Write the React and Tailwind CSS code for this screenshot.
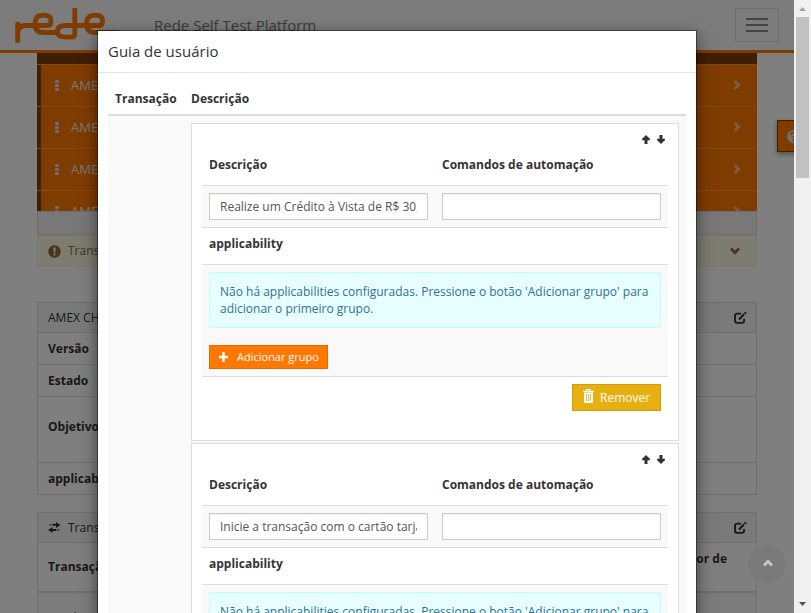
const Arrow = ({ down }) => (
  <svg className={down ? "rotate-180" : ""} width="8" height="9" viewBox="0 0 8 9" fill="#333">
    <path d="M4 0 8 4V5.200H5.500V9H2.500V5.200H0V4z" />
  </svg>
);

const Chevron = ({ className }) => (
  <svg className={className} width="8" height="10" viewBox="0 0 8 10" fill="none" stroke="currentColor" strokeWidth="2.9">
    <path d="M1.500 1 5.700 5 1.500 9" />
  </svg>
);

const Edit = () => (
  <svg width="13" height="12" viewBox="0 0 13 12" fill="none" stroke="#333">
    <path d="M7 1.6H3.2Q1 1.6 1 3.6V8.8Q1 10.9 3.2 10.9H8Q10.1 10.9 10.1 8.8V7" strokeWidth="1.9" />
    <path d="M5 7.4 10 2.3" strokeWidth="2.2" />
    <path d="M10.6 1.7 12 .4" strokeWidth="2.2" />
  </svg>
);

const Logo = () => (
  <svg width="106" height="38" viewBox="14 6 106 38" fill="none" stroke="#ff7800" strokeWidth="4.8" strokeLinejoin="round">
    <path d="M17.700 42.700V22M17.700 33Q18 26 25 25.500H48Q51 25.500 51 20.500Q51 15.200 43 15.200Q35 15.200 35 24Q35 32.500 43 32.500H58" />
    <path d="M74.800 8V34Q74.800 37.200 71 37.200H66Q57.500 37.200 57.500 31.500Q57.500 25.500 66 25.500H99Q102.600 25.500 102.600 20.500Q102.600 15.200 95 15.200Q86.500 15.200 86.500 24Q86.500 32.500 95 32.500H119" />
  </svg>
);

const MenuRow = () => (
  <div className="flex h-[42px] shrink-0 items-center border-t border-[#ff9333] bg-[#ff7800]">
    <div className="h-full w-1 bg-[#803c00]" />
    <div className="ml-[14px] flex flex-col gap-px">
      <i className="h-[3px] w-[4px] rounded-[1px] bg-[#ddd]" />
      <i className="h-[3px] w-[4px] rounded-[1px] bg-[#ddd]" />
      <i className="h-[3px] w-[4px] rounded-[1px] bg-[#ddd]" />
    </div>
    <span className="ml-[12px] flex-1 text-[13px] text-[#eee]">AMEX</span>
    <Chevron className="mr-4 mb-px text-[#ffb980]" />
  </div>
);

const Row = ({ h, children }) => (
  <div className={`flex items-center border-b border-[#ddd] pl-[10px] font-bold ${h}`}>{children}</div>
);

const Input = ({ value }) => (
  <div className="h-[27px] w-[219px] border border-[#ccc] bg-white px-[10px] shadow-[inset_0_1px_1px_rgba(0,0,0,0.075)]">
    <div className="h-[25px] overflow-hidden leading-[25px] whitespace-nowrap text-[#555]">{value}</div>
  </div>
);

const Step = ({ text }) => (
  <div className="h-[318px] w-[488px] shrink-0 border border-[#ddd] bg-white px-[10px] text-[#333]">
    <div className="flex h-[30px] items-center justify-end gap-[7px] pr-[3px]">
      <Arrow />
      <Arrow down />
    </div>
    <div className="flex h-[31px] items-start pl-[7px] leading-[21px] font-bold">
      <span className="w-[233px]">Descrição</span>
      <span>Comandos de automação</span>
    </div>
    <div className="flex h-[42px] gap-[14px] border-t border-[#ddd] bg-[#f9f9f9] pt-[7px] pl-[7px]">
      <Input value={text} />
      <Input />
    </div>
    <div className="h-[37px] border-t border-[#ddd] pl-[7px] leading-[32px] font-bold">applicability</div>
    <div className="h-[113px] border-y border-[#ddd] bg-[#f9f9f9] px-[7px] pt-[7px]">
      <div className="h-[56px] border border-[#bffff8] bg-[#e8ffff] px-[10px] pt-[10px] leading-[17px] text-[#31708f]">
        Não há applicabilities configuradas. Pressione o botão 'Adicionar grupo' para adicionar o primeiro grupo.
      </div>
      <div className="mt-[17px] flex h-[24px] w-[119px] items-center border border-[#e66c00] bg-[#ff7800] pl-[9px] text-[11px] text-white">
        <svg width="9" height="10" viewBox="0 0 9 10" fill="white"><path d="M3.300 0h2.400v3.800H9v2.400H5.700V10H3.300V6.200H0V3.800h3.300z" /></svg>
        <span className="ml-[9px]">Adicionar grupo</span>
      </div>
    </div>
    <div className="mt-[7px] mr-[7px] ml-auto flex h-[27px] w-[89px] items-center border border-[#cf9d0d] bg-[#e7b010] pl-[10px] text-white">
      <svg className="mb-[3px]" width="11" height="14" viewBox="0 0 11 14" fill="white">
        <path fillRule="evenodd" d="M3 0h5v1.800h3V3H0V1.800h3zM4 1v.8h3V1zM1 3.500h9V14H1zM3 5v7h.8V5zM5.100 5v7h.8V5zM7.200 5v7H8V5z" />
      </svg>
      <span className="ml-[6px]">Remover</span>
    </div>
  </div>
);

export default function App() {
  return (
    <div className="relative flex h-[613px] w-[811px] overflow-hidden bg-white font-['Open_Sans','Noto_Sans',sans-serif] text-[12px] text-[#333]">
      <div className="relative h-full w-[794px] overflow-hidden">
        <header className="flex h-[53px] border-b-[3px] border-[#ff7800] bg-[#f8f8f8] pl-[14px]">
          <div className="pt-[6px]"><Logo /></div>
          <div className="ml-[34px] flex-1 pt-[14px] text-[15px] leading-[22px] text-[#777]">Rede Self Test Platform</div>
          <div className="mt-[8px] mr-[15px] flex h-[34px] w-[44px] flex-col items-center justify-center gap-[4px] border border-[#ddd]">
            <i className="h-[2px] w-[22px] bg-[#888]" />
            <i className="h-[2px] w-[22px] bg-[#888]" />
            <i className="h-[2px] w-[22px] bg-[#888]" />
          </div>
        </header>
        <main className="ml-[37px] w-[720px]">
          <div className="flex h-[158px] flex-col overflow-hidden bg-[#803c00] pt-[11px]">
            <MenuRow /><MenuRow /><MenuRow /><MenuRow />
          </div>
          <div className="h-[24px] border border-[#ddd] bg-[#f0f0f0]" />
          <div className="flex h-[32px] items-center border border-[#faebcc] bg-[#fcf8e3] pl-[10px] text-[#8a6d3b]">
            <svg width="13" height="13" viewBox="0 0 13 13"><circle cx="6.500" cy="6.500" r="6.200" fill="#8a6d3b" /><path d="M5.300 2.500h2.400L7.300 7.500H5.700zM5.500 8.500h2v2h-2z" fill="#fcf8e3" /></svg>
            <span className="ml-[7px] flex-1">Transações</span>
            <Chevron className="mr-[17px] rotate-90 text-[#8a6d3b]" />
          </div>
          <section className="mt-[35px] border border-b-0 border-[#ddd]">
            <div className="flex h-[30px] items-center border-b border-[#ddd] bg-[#f5f5f5] pr-[9px] pl-[10px]"><span className="flex-1">AMEX CHIP</span><Edit /></div>
            <Row h="h-[32px]">Versão</Row>
            <Row h="h-[32px]">Estado</Row>
            <Row h="h-[66px] pb-[5px]">Objetivo</Row>
            <Row h="h-[32px]">applicability</Row>
          </section>
          <section className="mt-[17px] border border-[#ddd]">
            <div className="flex h-[30px] items-center border-b border-[#ddd] bg-[#f5f5f5] pr-[9px] pl-[10px]">
              <svg width="13" height="11" viewBox="0 0 13 11" fill="#333"><path d="M12.500 3 8 0v1.700H4.500v2H8V6zM0 8l4.500 3V9H8V7H4.500V5zM1 2.400h3v.8H1zM8.500 7.600h3v.8h-3z" /></svg>
              <span className="ml-[7px] flex-1">Transações</span><Edit />
            </div>
            <div className="flex h-[50px] border-b-2 border-[#ddd] pr-[29px] pl-[10px] font-bold">
              <span className="flex-1 leading-[48px]">Transação</span><span className="pt-[7px] leading-[17px]">Valor de</span>
            </div>
            <div className="h-[60px] bg-[#f9f9f9] pt-[16px] pl-[10px] leading-[17px]">Venda</div>
          </section>
        </main>
        <div className="absolute top-[120px] left-[777px] flex h-[32px] w-[40px] items-center border border-[#803c00] bg-[#ff7800] pl-[9px] shadow-[0_2px_5px_rgba(0,0,0,0.4)]">
          <svg width="13" height="13" viewBox="0 0 13 13"><circle cx="6.500" cy="6.500" r="6.500" fill="#ddd" /><path d="M4 5q0-2.500 2.500-2.500T9 4.800Q9 6 6.500 7v1M6.500 9v2" stroke="#ff7800" strokeWidth="1.700" fill="none" /></svg>
        </div>
        <div className="absolute inset-0 bg-black/50" />
        <div className="absolute top-[545px] left-[748px] flex h-[38px] w-[38px] items-center justify-center rounded-full bg-[#7a7a7a]">
          <Chevron className="mb-[2px] ml-px -rotate-90 text-[#c8c8c8]" />
        </div>
        <div className="absolute top-[30px] left-[97px] h-[640px] w-[600px] border border-black/40 bg-white bg-clip-padding shadow-[0_5px_15px_rgba(0,0,0,0.5)]">
          <div className="h-[42px] border-b border-[#e5e5e5] pl-[10px] text-[15px] leading-[41px]">Guia de usuário</div>
          <div className="mx-[10px] mt-[10px]">
            <div className="flex h-[33px] border-b-2 border-[#ddd] pl-[7px] leading-[32px] font-bold">
              <span className="w-[76px]">Transação</span><span>Descrição</span>
            </div>
            <div className="flex h-[560px] flex-col gap-[2px] bg-[#f9f9f9] pt-[7px] pl-[83px]">
              <Step text="Realize um Crédito à Vista de R$ 30,00" />
              <Step text="Inicie a transação com o cartão tarja" />
            </div>
          </div>
        </div>
      </div>
      <div className="flex w-[17px] flex-col items-center bg-[#f1f1f1]">
        <svg className="mt-[7px]" width="7" height="4" viewBox="0 0 7 4" fill="#a3a3a3"><path d="M3.500 0 7 4H0z" /></svg>
        <div className="mt-[6px] h-[161px] w-[13px] bg-[#c1c1c1]" />
        <svg className="mt-auto mb-[7px]" width="7" height="4" viewBox="0 0 7 4" fill="#505050"><path d="M0 0h7L3.500 4z" /></svg>
      </div>
    </div>
  );
}
